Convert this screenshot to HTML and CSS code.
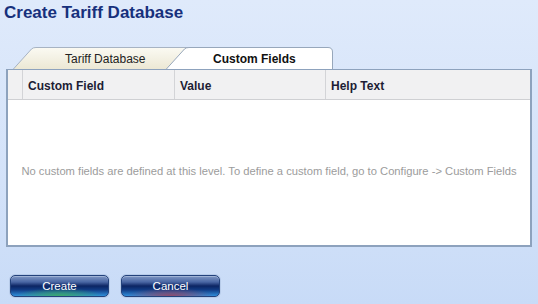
FILE: index.html
```html
<!DOCTYPE html>
<html lang="en">
<head>
    <meta charset="UTF-8">
    <title>Create Tariff Database</title>
    <link rel="stylesheet" href="styles.css">
</head>
<body>

    <h1 class="page-title">Create Tariff Database</h1>

    <div class="tabs">
        <div class="tab">
            <svg class="tab-shape" width="180" height="23" viewBox="0 0 180 23">
                <defs>
                    <linearGradient id="cream" x1="0" y1="0" x2="0" y2="1">
                        <stop offset="0" stop-color="#fbfaf3"/>
                        <stop offset="1" stop-color="#ebe7d3"/>
                    </linearGradient>
                </defs>
                <path d="M0.5,23 L19.5,2 Q21,0.5 24,0.5 L180,0.5 L180,23 Z" fill="url(#cream)" stroke="#a7b3c3"/>
            </svg>
            <span class="tab-label">Tariff Database</span>
        </div>
        <div class="tab tab-active">
            <svg class="tab-shape" width="168" height="23" viewBox="0 0 168 23">
                <path d="M0.5,23 L19.5,2 Q21,0.5 24,0.5 L163,0.5 Q167.5,0.5 167.5,5 L167.5,23 Z" fill="#ffffff" stroke="#97a7bb"/>
            </svg>
            <span class="tab-label">Custom Fields</span>
        </div>
    </div>

    <section class="grid-panel">
        <div class="grid-header">
            <div class="col col-select"></div>
            <div class="col col-field">Custom Field</div>
            <div class="col col-value">Value</div>
            <div class="col col-help">Help Text</div>
        </div>
        <div class="grid-empty">
            No custom fields are defined at this level. To define a custom field, go to Configure -&gt; Custom Fields
        </div>
    </section>

    <div class="actions">
        <button class="btn btn-create">Create</button>
        <button class="btn btn-cancel">Cancel</button>
    </div>

</body>
</html>
```

FILE: styles.css
```css
/* Page */
body {
    margin: 0;
    min-height: 304px;
    font-family: "Liberation Sans", Arial, sans-serif;
    background: linear-gradient(to bottom, #dfeafb 0%, #d3e2f9 60%, #c8dbf7 100%);
    color: #1c1c30;
}

.page-title {
    margin: 0;
    padding: 3px 0 0 4px;
    font-size: 17px;
    line-height: 20px;
    font-weight: bold;
    color: #17307c;
}

/* Tabs */
.tabs {
    display: flex;
    margin-top: 24px;
    padding-left: 12px;
    height: 22px;
}

.tab {
    display: grid;
    height: 23px;
}

.tab-shape,
.tab-label {
    grid-area: 1 / 1;
}

.tab-label {
    font-size: 12px;
    line-height: 24px;
    color: #222;
    padding-left: 53px;
}

.tab-active {
    margin-left: -27px;
    z-index: 1;
}

.tab-active .tab-label {
    font-weight: bold;
    color: #111;
    padding-left: 48px;
}

/* Grid */
.grid-panel {
    position: relative;
    z-index: 2;
    margin: 0 6px;
    height: 178px;
    box-sizing: border-box;
    background-color: #ffffff;
    border: 2px solid #8da2bd;
    border-top-width: 1px;
}

.grid-header {
    display: flex;
    height: 29px;
    background-color: #f1f1f2;
    border-bottom: 1px solid #cfd0d3;
}

.col {
    font-size: 12px;
    font-weight: bold;
    line-height: 26px;
    padding: 3px 0 0 5px;
    border-left: 1px solid #d3d4d7;
    color: #1d1d35;
}

.col-select {
    width: 14px;
    padding: 0;
    border-left: none;
}

.col-field {
    width: 146px;
}

.col-value {
    width: 145px;
}

.col-help {
    flex: 1;
}

.grid-empty {
    padding-top: 65px;
    text-align: center;
    font-size: 11.2px;
    color: #9c9c9c;
}

/* Buttons */
.actions {
    display: flex;
    gap: 12px;
    padding: 28px 0 0 10px;
}

.btn {
    width: 99px;
    height: 22px;
    padding: 0;
    border: 1px solid #23427c;
    border-radius: 5px;
    font-family: "Liberation Sans", Arial, sans-serif;
    font-size: 11.5px;
    color: #ffffff;
    box-shadow: inset 0 1px 0 #9fb3d6, 0 0 0 1px #b7cbe9;
    background:
        radial-gradient(ellipse 45% 40% at 50% 100%, rgba(60, 170, 100, 0.95), rgba(60, 170, 100, 0) 100%),
        linear-gradient(to bottom, #7f97c4 0%, #4a67a4 30%, #0c2563 50%, #123d86 70%, #2f8fdc 100%);
}

.btn-cancel {
    background:
        radial-gradient(ellipse 45% 40% at 50% 100%, rgba(150, 70, 100, 0.95), rgba(150, 70, 100, 0) 100%),
        linear-gradient(to bottom, #7f97c4 0%, #4a67a4 30%, #0c2563 50%, #123d86 70%, #2f8fdc 100%);
}
```
